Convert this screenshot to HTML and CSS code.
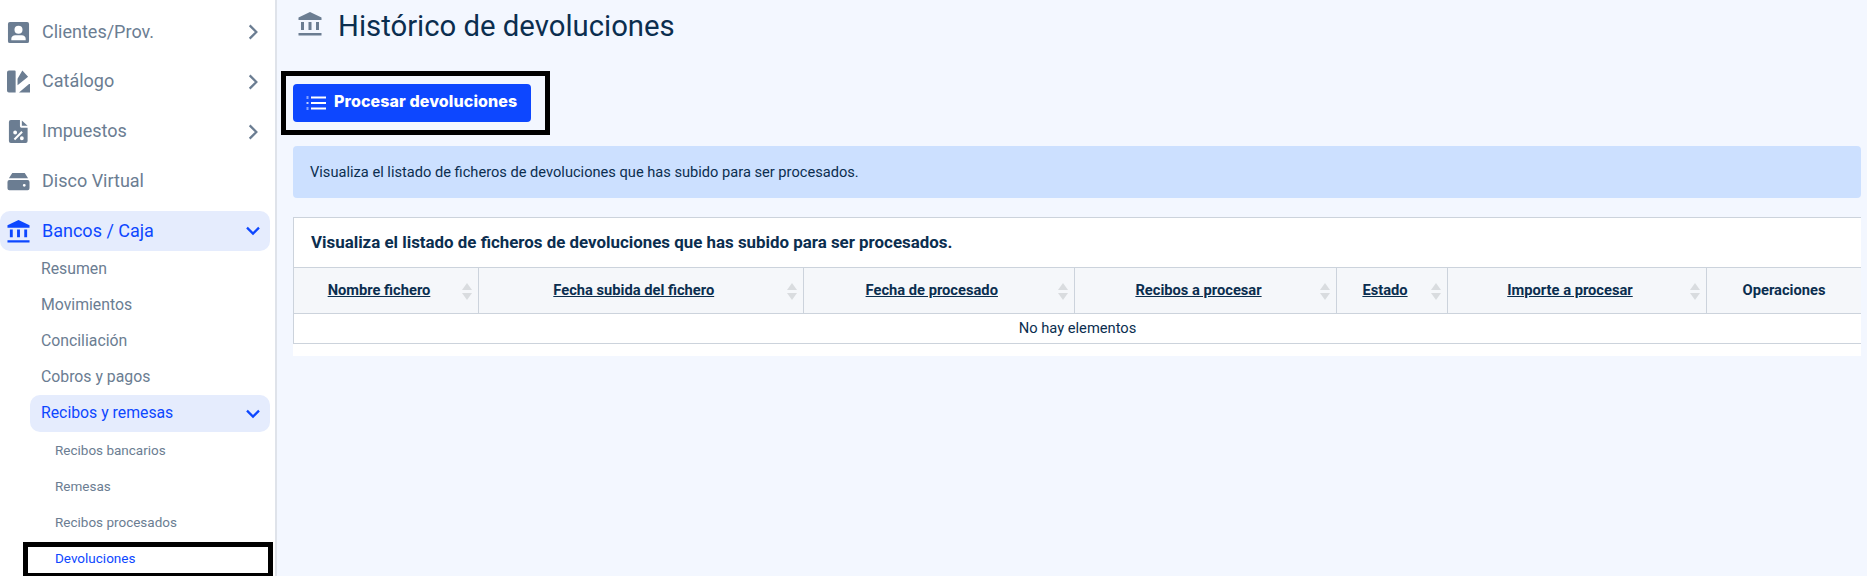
FILE: index.html
```html
<!DOCTYPE html>
<html>

<head>
    <meta charset="UTF-8">
    <meta name="viewport" content="width=device-width, initial-scale=1.0">
    <link rel="stylesheet" href="styles.css">
    <title>Histórico de devoluciones</title>
</head>

<body>

    <div class="sidebar">
        <a class="menu-item" href="#clientes">
            <svg class="menu-icon" viewBox="0 0 24 24"><path fill-rule="evenodd" d="M3 1h18a2 2 0 0 1 2 2v18a2 2 0 0 1-2 2H3a2 2 0 0 1-2-2V3a2 2 0 0 1 2-2zm9 4a4.200 4.200 0 1 0 0 8.400 4.200 4.200 0 0 0 0-8.400zM4.500 20h15v-1.500c0-2.500-2-3.700-4-3.700h-7c-2 0-4 1.200-4 3.700z"/></svg>
            <span class="menu-label">Clientes/Prov.</span>
            <svg class="chevron" viewBox="0 0 12 12"><path d="M3.500 1 8.500 6 3.500 11"/></svg>
        </a>
        <a class="menu-item" href="#catalogo">
            <svg class="menu-icon" viewBox="0 0 24 24"><path d="M0 2.500A2 2 0 0 1 2 .5h6a1 1 0 0 1 1 1V23.500H2a2 2 0 0 1-2-2zM11 16V9L16 .5l6 6.500zM12.500 23.500 23 14.500h1v9z"/></svg>
            <span class="menu-label">Catálogo</span>
            <svg class="chevron" viewBox="0 0 12 12"><path d="M3.500 1 8.500 6 3.500 11"/></svg>
        </a>
        <a class="menu-item" href="#impuestos">
            <svg class="menu-icon" viewBox="0 0 24 24"><path fill-rule="evenodd" d="M4 0h9.500v6.500A1.500 1.500 0 0 0 15 8h6.500v14a2 2 0 0 1-2 2H4a2 2 0 0 1-2-2V2a2 2 0 0 1 2-2zM15.500.5l6 5.500h-6zM15 11.500l-8 8 1.500 1.500 8-8zM8.500 11a2 2 0 1 0 0 4 2 2 0 0 0 0-4zM15.500 17a2 2 0 1 0 0 4 2 2 0 0 0 0-4z"/></svg>
            <span class="menu-label">Impuestos</span>
            <svg class="chevron" viewBox="0 0 12 12"><path d="M3.500 1 8.500 6 3.500 11"/></svg>
        </a>
        <a class="menu-item" href="#disco">
            <svg class="menu-icon" viewBox="0 0 24 24"><path fill-rule="evenodd" d="M5.500 3h13L22 8.500H2zM2.500 10.500h19a2 2 0 0 1 2 2V19a2 2 0 0 1-2 2h-19a2 2 0 0 1-2-2v-6.500a2 2 0 0 1 2-2zM18 14.500a1.500 1.500 0 1 0 0 3 1.500 1.500 0 0 0 0-3z"/></svg>
            <span class="menu-label">Disco Virtual</span>
        </a>
        <a class="menu-item menu-item-open" href="#bancos">
            <svg class="menu-icon" viewBox="0 0 24 24"><path d="M12 0 23.500 5.500V8H.5V5.500zM3 10h3v8H3zM10.500 10h3v8h-3zM18 10h3v8h-3zM.5 21h23v2.500H.5z"/></svg>
            <span class="menu-label">Bancos / Caja</span>
            <svg class="chevron" viewBox="0 0 12 12"><path d="M1.500 3.500 6 8 10.500 3.500"/></svg>
        </a>

        <a class="sub-item" href="#resumen">Resumen</a>
        <a class="sub-item" href="#movimientos">Movimientos</a>
        <a class="sub-item" href="#conciliacion">Conciliación</a>
        <a class="sub-item" href="#cobros">Cobros y pagos</a>
        <a class="sub-item sub-item-open" href="#recibos">
            <span class="menu-label">Recibos y remesas</span>
            <svg class="chevron" viewBox="0 0 12 12"><path d="M1.500 3.500 6 8 10.500 3.500"/></svg>
        </a>

        <a class="leaf-item" href="#bancarios">Recibos bancarios</a>
        <a class="leaf-item" href="#remesas">Remesas</a>
        <a class="leaf-item" href="#procesados">Recibos procesados</a>
        <div class="marked-item">
            <a class="leaf-item leaf-item-active" href="#devoluciones">Devoluciones</a>
        </div>
    </div>

    <div class="main">
        <div class="page-title">
            <svg class="title-icon" viewBox="0 0 24 24"><path d="M12 0 23.500 5.500V8H.5V5.500zM3 10h3v8H3zM10.500 10h3v8h-3zM18 10h3v8h-3zM.5 21h23v2.500H.5z"/></svg>
            <h1>Histórico de devoluciones</h1>
        </div>

        <div class="marked-button">
            <button class="btn-primary" type="button">
                <svg class="btn-icon" viewBox="0 0 20 16"><path d="M5 1.500h15v2H5zM5 7h15v2H5zM5 12.500h15v2H5z"/><path d="M.5 1.500h2v.8h-2zM.5 2.800h2v.8h-2zM.5 7h2v.8h-2zM.5 8.300h2v.8h-2zM.5 12.500h2v.8h-2zM.5 13.800h2v.8h-2z"/></svg>
                <span class="btn-label">Procesar devoluciones</span>
            </button>
        </div>

        <div class="alert">Visualiza el listado de ficheros de devoluciones que has subido para ser procesados.</div>

        <div class="card">
            <h2>Visualiza el listado de ficheros de devoluciones que has subido para ser procesados.</h2>
            <table>
                <colgroup>
                    <col class="col-nombre">
                    <col class="col-subida">
                    <col class="col-procesado">
                    <col class="col-recibos">
                    <col class="col-estado">
                    <col class="col-importe">
                    <col class="col-operaciones">
                </colgroup>
                <thead>
                    <tr>
                        <th class="sortable"><a href="#nombre">Nombre fichero</a><span class="sort"></span></th>
                        <th class="sortable"><a href="#subida">Fecha subida del fichero</a><span class="sort"></span></th>
                        <th class="sortable"><a href="#procesado">Fecha de procesado</a><span class="sort"></span></th>
                        <th class="sortable"><a href="#recibos">Recibos a procesar</a><span class="sort"></span></th>
                        <th class="sortable"><a href="#estado">Estado</a><span class="sort"></span></th>
                        <th class="sortable"><a href="#importe">Importe a procesar</a><span class="sort"></span></th>
                        <th>Operaciones</th>
                    </tr>
                </thead>
                <tbody>
                    <tr>
                        <td colspan="7">No hay elementos</td>
                    </tr>
                </tbody>
            </table>
        </div>
    </div>

</body>

</html>
```

FILE: styles.css
```css
html,
body {
    height: 576px;
    overflow: hidden;
}

body {
    margin: 0;
    padding: 0;
    display: flex;
    background-color: #f3f7ff;
    font-family: Roboto, "Liberation Sans", sans-serif;
    color: #0b2e4f;
}

a {
    text-decoration: none;
}

/* sidebar */

.sidebar {
    width: 277px;
    height: 576px;
    flex: none;
    padding-top: 12px;
    box-sizing: border-box;
    background-color: white;
    border-right: 2px solid #dfe3ea;
    overflow: hidden;
}

.menu-item {
    display: flex;
    align-items: center;
    width: 270px;
    height: 40px;
    margin-bottom: 9.75px;
    padding: 0 9px 0 7px;
    box-sizing: border-box;
    border-radius: 10px;
    color: #6b7d92;
    font-size: 18px;
}

.menu-item-open,
.sub-item-open {
    background-color: #e5ecfd;
    color: #0d47ff;
}

.menu-item-open {
    margin-bottom: 0;
}

.menu-icon {
    width: 23px;
    height: 23px;
    margin-right: 12px;
    fill: #6b7d92;
}

.menu-item-open .menu-icon {
    fill: #0d47ff;
}

.menu-label {
    flex: 1;
    padding-bottom: 2px;
}

.chevron {
    width: 16px;
    height: 16px;
    fill: none;
    stroke: #6b7d92;
    stroke-width: 1.700;
}

.menu-item-open .chevron,
.sub-item-open .chevron {
    stroke: #0d47ff;
}

.sub-item {
    display: flex;
    align-items: center;
    height: 36px;
    margin-left: 30px;
    width: 240px;
    padding: 0 9px 2px 11px;
    box-sizing: border-box;
    color: #6b7d92;
    font-size: 15.800px;
}

.sub-item-open {
    height: 37px;
    padding-bottom: 0;
    border-radius: 10px;
    color: #0d47ff;
}

.leaf-item {
    display: flex;
    align-items: center;
    height: 36px;
    padding-left: 55px;
    color: #6b7d92;
    font-size: 13.500px;
}

.marked-item {
    width: 250px;
    height: 36px;
    margin-left: 23px;
    margin-top: 2px;
    box-sizing: border-box;
    border: 5px solid black;
    background-color: white;
}

.leaf-item-active {
    height: 22px;
    padding-left: 27px;
    color: #0d47ff;
}

/* main */

.main {
    flex: 1;
    min-width: 0;
    padding: 0 6px 0 16px;
}

.page-title {
    display: flex;
    align-items: center;
    height: 50px;
    margin-left: 5px;
}

.title-icon {
    width: 24px;
    height: 24px;
    margin: 0 16px 2px 0;
    fill: #6b7d92;
}

h1 {
    margin: 0;
    padding-top: 2px;
    font-size: 29.300px;
    font-weight: 400;
}

.marked-button {
    width: 269px;
    height: 64px;
    margin: 21px 0 11px -12px;
    padding: 8px 0 0 7px;
    box-sizing: border-box;
    border: 5px solid black;
}

.btn-primary {
    display: flex;
    align-items: center;
    width: 238px;
    height: 38px;
    padding: 0 0 0 13px;
    border: none;
    border-radius: 4px;
    background-color: #0d47ff;
    color: white;
    font-family: Inter, sans-serif;
    font-size: 16px;
    font-weight: 800;
    cursor: pointer;
}

.btn-label {
    padding-bottom: 5px;
    letter-spacing: 0.1px;
}

.btn-icon {
    width: 20px;
    height: 16px;
    margin: 0 8px 0 0;
    fill: white;
}

.alert {
    height: 52px;
    line-height: 52px;
    padding-left: 17px;
    border-radius: 4px;
    background-color: #cce0ff;
    font-size: 14.630px;
}

.card {
    height: 139px;
    margin-top: 19px;
    background-color: white;
    border-top: 1px solid #ccd3dc;
    box-sizing: border-box;
}

h2 {
    margin: 0;
    height: 49px;
    line-height: 49px;
    padding-left: 17px;
    border-left: 1px solid #ccd3dc;
    font-size: 16.900px;
    font-weight: 700;
}

table {
    width: 100%;
    table-layout: fixed;
    border-collapse: collapse;
    font-size: 14.700px;
}

.col-nombre { width: 185px; }
.col-subida { width: 324.500px; }
.col-procesado { width: 271.500px; }
.col-recibos { width: 262px; }
.col-estado { width: 111px; }
.col-importe { width: 259px; }

th {
    height: 46px;
    padding: 0 14px 2px 0;
    position: relative;
    box-sizing: border-box;
    background-color: #f5f7fa;
    border: 1px solid #ccd3dc;
    font-weight: 700;
}

th:last-child {
    padding-right: 0;
    border-right: none;
}

th a {
    color: #0b2e4f;
    text-decoration: underline;
}

/* sort arrows sit over the header cell */
.sort {
    position: absolute;
    right: 6px;
    top: 15px;
    width: 10px;
    height: 17px;
}

.sort::before,
.sort::after {
    content: "";
    position: absolute;
    left: 0;
    border-left: 5px solid transparent;
    border-right: 5px solid transparent;
}

.sort::before {
    top: 0;
    border-bottom: 7.500px solid #d9dcdf;
}

.sort::after {
    bottom: 0;
    border-top: 7.500px solid #d9dcdf;
}

td {
    height: 30px;
    padding: 0 0 2px;
    text-align: center;
    border: 1px solid #ccd3dc;
    border-right: none;
    box-sizing: border-box;
}
```
